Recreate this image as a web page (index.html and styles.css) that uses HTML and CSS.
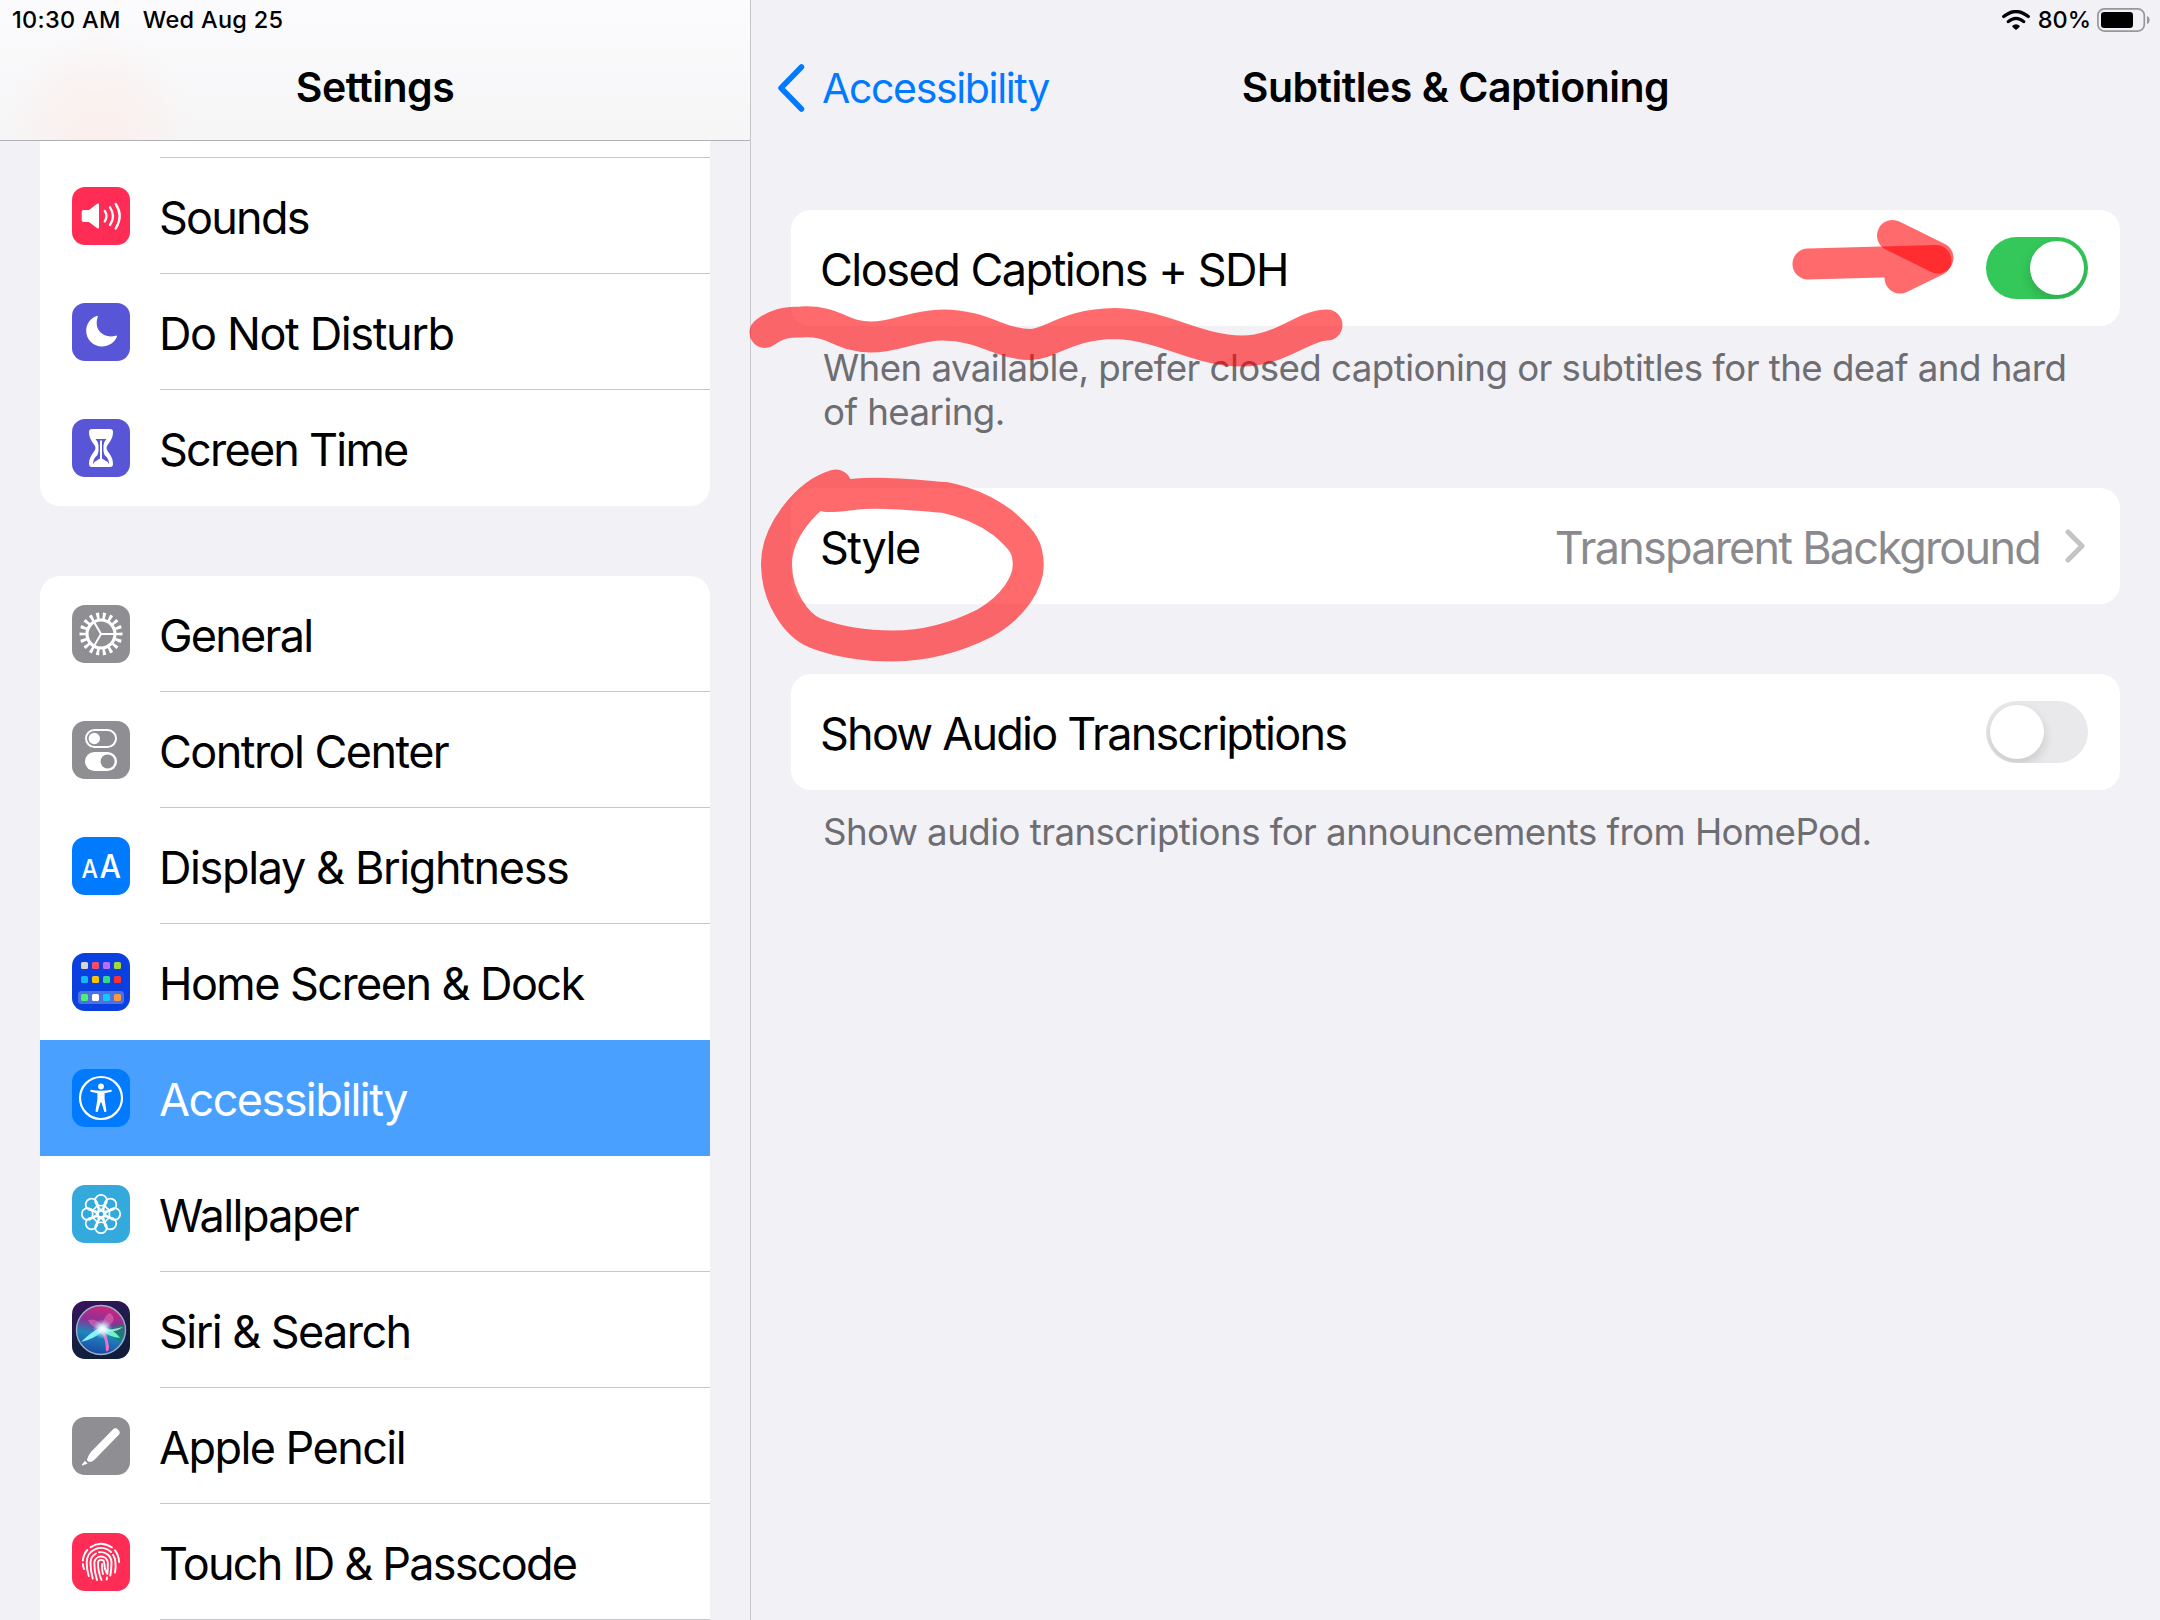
FILE: index.html
```html
<!DOCTYPE html>
<html lang="en">
<head>
    <meta charset="UTF-8">
    <meta name="viewport" content="width=device-width, initial-scale=1.0">
    <title>Settings</title>
    <link rel="stylesheet" href="styles.css">
</head>
<body>
    <div class="screen">
        <!-- Sidebar -->
        <aside class="sidebar">
            <header class="sidebar-header">
                <div class="status"><span>10:30 AM</span><span>Wed Aug 25</span></div>
                <h1 class="title">Settings</h1>
            </header>

            <ul class="group group-top">
                <li class="row stub"></li>
                <li class="row">
                    <svg class="icon pink" viewBox="0 0 58 58"><path fill="#fff" d="M11.5 23H17L25.2 16.8Q27 15.6 27 17.8V40.2Q27 42.4 25.2 41.2L17 35H11.5Q9.7 35 9.7 33.2V24.8Q9.7 23 11.5 23Z"/><path class="line" stroke-width="2.3" d="M32.8 24Q36.2 29 32.8 34.3M38 20.3Q44 29 38 38M43.7 17Q51.7 29 43.7 41.5"/></svg>
                    <span class="label tight">Sounds</span>
                </li>
                <li class="row">
                    <svg class="icon purple" viewBox="0 0 58 58"><path fill="#fff" d="M24.6 13C17 16 14.2 22 14.2 28A15.7 15.7 0 0 0 30 43.5C36.5 43.5 43 39.5 45 33.6Q45.2 32.3 43.8 32.7C33 36 21 28 25.8 13.8Q25.8 12.5 24.6 13Z"/></svg>
                    <span class="label loose">Do Not Disturb</span>
                </li>
                <li class="row">
                    <svg class="icon purple" viewBox="0 0 58 58"><path fill="#fff" d="M17 13Q17 10 20 10H38Q41 10 41 13C41 20 37 23.5 35 27Q34 29 35 31C37 34.5 41 38 41 45Q41 48 38 48H20Q17 48 17 45C17 38 21 34.5 23 31Q24 29 23 27C21 23.5 17 20 17 13Z"/><path fill="#5856d6" d="M23.5 20H34.5Q31.5 23 31.5 26.5V32.5Q31.7 36 35 38.5Q37 41 37 44.5H21Q21 41 23 38.5Q26.3 36 26.5 32.5V26.5Q26.5 23 23.5 20Z"/><path fill="#fff" d="M28 21.5H30V39.5L36 43.2V45H22V43.2L28 39.5Z"/></svg>
                    <span class="label tight">Screen Time</span>
                </li>
            </ul>

            <ul class="group group-main">
                <li class="row">
                    <svg class="icon gray" viewBox="0 0 58 58"><circle class="line" cx="29" cy="29" r="14" stroke-width="3.2"/><circle class="line teeth" cx="29" cy="29" r="18" stroke-width="7" pathLength="36"/><path class="line" stroke-width="2" d="M29 29H43M29 29L22 16.9M29 29L22 41.1"/></svg>
                    <span class="label tight">General</span>
                </li>
                <li class="row">
                    <svg class="icon gray" viewBox="0 0 58 58"><rect class="line" x="14" y="9" width="30" height="17" rx="8.5" stroke-width="2"/><circle fill="#fff" cx="22.3" cy="17.5" r="5.7"/><rect fill="#fff" x="13" y="31" width="32" height="19" rx="9.5"/><circle fill="#8e8e93" cx="35.6" cy="40.5" r="7"/></svg>
                    <span class="label">Control Center</span>
                </li>
                <li class="row">
                    <svg class="icon blue" viewBox="0 0 58 58"><text class="aa" x="9.5" y="41" font-size="26" textLength="16.5" lengthAdjust="spacingAndGlyphs">A</text><text class="aa" x="27.5" y="41" font-size="33" textLength="21.5" lengthAdjust="spacingAndGlyphs">A</text></svg>
                    <span class="label loose">Display &amp; Brightness</span>
                </li>
                <li class="row">
                    <svg class="icon home" viewBox="0 0 58 58">
                        <rect x="6" y="38" width="46" height="13" rx="3.5" fill="#4c71e2"/>
                        <rect x="9" y="9" width="7" height="7" rx="1.5" fill="#d6d6d6"/><rect x="20" y="9" width="7" height="7" rx="1.5" fill="#ff4d5e"/><rect x="31" y="9" width="7" height="7" rx="1.5" fill="#bf6bff"/><rect x="42" y="9" width="7" height="7" rx="1.5" fill="#a8d92e"/>
                        <rect x="9" y="23" width="7" height="7" rx="1.5" fill="#16b4fb"/><rect x="20" y="23" width="7" height="7" rx="1.5" fill="#ffc400"/><rect x="31" y="23" width="7" height="7" rx="1.5" fill="#33d98c"/><rect x="42" y="23" width="7" height="7" rx="1.5" fill="#ff3030"/>
                        <rect x="9" y="41" width="7" height="7" rx="1.5" fill="#50f06e"/><rect x="20" y="41" width="7" height="7" rx="1.5" fill="#fff"/><rect x="31" y="41" width="7" height="7" rx="1.5" fill="#16c8fb"/><rect x="42" y="41" width="7" height="7" rx="1.5" fill="#fb9a3c"/>
                    </svg>
                    <span class="label">Home Screen &amp; Dock</span>
                </li>
                <li class="row selected">
                    <svg class="icon blue" viewBox="0 0 58 58"><circle class="line" cx="29" cy="29" r="21" stroke-width="2.2"/><circle fill="#fff" cx="29" cy="17.5" r="2.9"/><path fill="#fff" d="M18.8 20.8Q29 22.8 39.2 20.8Q40.4 22 39.4 22.8L32.6 24.2V30L34.5 42.3Q33.6 43.6 32.3 42.7L29.5 33.5H28.5L25.7 42.7Q24.4 43.6 23.5 42.3L25.4 30V24.2L18.6 22.8Q17.6 22 18.8 20.8Z"/></svg>
                    <span class="label">Accessibility</span>
                </li>
                <li class="row">
                    <svg class="icon cyan" viewBox="0 0 58 58">
                        <defs><path id="petal" d="M29 25.8L24.5 19.5A5.9 5.9 0 1 1 33.5 19.5L29 25.8M24.5 19.5Q29 22 33.5 19.5"/></defs>
                        <g class="line" stroke-width="1.7">
                            <circle cx="29" cy="29" r="3.2"/>
                            <use href="#petal"/><use href="#petal" transform="rotate(45 29 29)"/><use href="#petal" transform="rotate(90 29 29)"/><use href="#petal" transform="rotate(135 29 29)"/><use href="#petal" transform="rotate(180 29 29)"/><use href="#petal" transform="rotate(225 29 29)"/><use href="#petal" transform="rotate(270 29 29)"/><use href="#petal" transform="rotate(315 29 29)"/>
                        </g>
                    </svg>
                    <span class="label">Wallpaper</span>
                </li>
                <li class="row">
                    <svg class="icon siri" viewBox="0 0 58 58">
                        <defs>
                            <linearGradient id="orb" x1="0.6" y1="0" x2="0.4" y2="1"><stop offset="0" stop-color="#d0267e"/><stop offset="0.35" stop-color="#8a3296"/><stop offset="0.6" stop-color="#1f86bc"/><stop offset="1" stop-color="#1a46a4"/></linearGradient>
                            <radialGradient id="glow"><stop offset="0" stop-color="#fff"/><stop offset="0.4" stop-color="#e4f8ff" stop-opacity="0.8"/><stop offset="1" stop-color="#7fd8ff" stop-opacity="0"/></radialGradient>
                        </defs>
                        <circle cx="29" cy="29" r="24.5" fill="url(#orb)" stroke="#9fb0c8" stroke-width="1.4"/>
                        <path fill="#14806c" opacity="0.8" d="M31 28L52 23Q54 33 48 41Z"/>
                        <path fill="#e86ab4" opacity="0.6" d="M29 28Q18 26 16 19Q25 17 30 25Q32 14 38 12Q48 20 31 28Z"/>
                        <path fill="#8af2f6" d="M31 25Q20 30 9 41Q22 38 31 30Z"/>
                        <path fill="#6ff5c0" d="M30 26Q42 28 48 37Q38 36 30 30Z"/>
                        <path fill="#f070c6" d="M28 28Q34 38 34 50Q37 51 37 46Q36 36 31 28Z"/>
                        <path fill="#c8ecf8" opacity="0.8" d="M31 29.5Q42 28 51 26Q42 33 31 29.5Z"/>
                        <circle cx="30.5" cy="28" r="10" fill="url(#glow)"/>
                    </svg>
                    <span class="label">Siri &amp; Search</span>
                </li>
                <li class="row">
                    <svg class="icon gray" viewBox="0 0 58 58"><path class="line" stroke-width="8" d="M22.5 37L43.5 15.5"/><path fill="#fff" d="M19.7 34.2L25.4 39.8Q22.5 43.5 19.5 44.7L16.5 44.7L14.8 43Q16 38 19.7 34.2ZM13 43.8L15.6 46.4L10.5 48.4Q9.7 48.4 10 47.6Z"/></svg>
                    <span class="label">Apple Pencil</span>
                </li>
                <li class="row">
                    <svg class="icon pink" viewBox="0 0 58 58"><path class="line" stroke-width="1.9" d="M18.5 14.2Q29 7.2 40 14.5M10.9 27.5Q11.3 21.5 15.3 17M43 17.3Q46.5 21.5 47.2 29M12 36Q11 33.5 10.9 31M16.7 43Q14.6 36 14.7 29.5A14.3 14.3 0 0 1 39 19M41 21.8Q45 28 43 39.5M20.7 45.5Q18.3 37 18.5 29.5A10.5 10.5 0 0 1 24 20.5M27 19.3A10.5 10.5 0 0 1 39.5 29.5Q39.5 37 38.3 42.5M25 47Q22 38 22.3 29.5A6.8 6.8 0 0 1 35.8 29.5Q36 36 35.3 41M29.5 47Q25.8 38 26 30A3.1 3.1 0 0 1 32.2 30Q32.5 36 34.5 39.5M30 31Q30 38 31 41M35 44.5L34.7 46.5"/></svg>
                    <span class="label tight">Touch ID &amp; Passcode</span>
                </li>
            </ul>
        </aside>

        <!-- Detail pane -->
        <main class="detail">
            <header class="detail-header">
                <div class="status status-right">
                    <svg class="wifi" viewBox="0 0 28 20"><path d="M1.7 6.6Q14-3.6 26.3 6.6M6.3 11.6Q14 5 21.7 11.6" fill="none" stroke="#000" stroke-width="3.2" stroke-linecap="round"/><path d="M10 16Q14 12.3 18 16Q17.5 17.5 14 20Q10.5 17.5 10 16Z"/></svg>
                    <span class="percent">80%</span>
                    <svg class="battery" viewBox="0 0 54 24"><rect x="0.9" y="0.9" width="46.4" height="22.2" rx="6.5" fill="none" stroke="#98979c" stroke-width="1.7"/><rect x="4" y="4" width="32" height="16" rx="3.2"/><path fill="#98979c" d="M50 8Q52.7 9 52.7 12T50 16Z"/></svg>
                </div>
                <div class="navbar">
                    <a class="back"><svg class="chevron-left" viewBox="0 0 28 48"><path d="M24.5 3L4 24L24.5 45"/></svg><span>Accessibility</span></a>
                    <h2 class="title">Subtitles &amp; Captioning</h2>
                    <span></span>
                </div>
            </header>

            <section class="section">
                <div class="card"><span class="name">Closed Captions + SDH</span><span class="toggle on"></span></div>
                <p class="note">When available, prefer closed captioning or subtitles for the deaf and hard<br>of hearing.</p>
            </section>
            <section class="section">
                <div class="card"><span class="name">Style</span><span class="value tight">Transparent Background</span><svg class="chevron-right" viewBox="0 0 20 34"><path d="M3 3L17 17L3 31"/></svg></div>
            </section>
            <section class="section">
                <div class="card"><span class="name tight">Show Audio Transcriptions</span><span class="toggle"></span></div>
                <p class="note">Show audio transcriptions for announcements from HomePod.</p>
            </section>
        </main>

        <!-- Marker strokes drawn over the screen -->
        <svg class="markup" viewBox="0 0 2160 1620">
            <path d="M765 332.5C776 324 785 322 801 322C836 320 840 337 871 337C897 337 914 325 943 325C982 325 1000 344 1030 344.5C1052 344 1066 324 1115 323.5C1165 325 1196 351 1242 351C1281 351 1304 325 1327 325"/>
            <path d="M836 485C808 493 776 531 776.5 565C777 597 796 625 815 633C841 643 865 646 893 646C925 646 957 637 985 623C1014 606 1028 583 1028.3 565C1028 548 1024 541 1003 523C987 511 967 502 945 497.5C925 496 890 492 864 493.5C850 494 841 497 827 496.5"/>
            <path d="M1808 264L1936 260.5L1900 278"/>
            <path d="M1892.5 235.5L1938 258"/>
        </svg>
    </div>
</body>
</html>
```
FILE: styles.css
```css
* {
    box-sizing: border-box;
}

body {
    margin: 0;
    background: #f2f1f6;
    font-family: 'Inter', 'Roboto', sans-serif;
    color: #000;
    overflow: hidden;
}

h1, h2, p, ul {
    margin: 0;
    padding: 0;
    font-weight: normal;
}

.screen {
    position: relative;
    display: flex;
    width: 2160px;
    height: 1620px;
    overflow: hidden;
}

/* Sidebar */
.sidebar {
    width: 751px;
    height: 1620px;
    border-right: 1px solid #c6c5ca;
    overflow: hidden;
}

.sidebar-header {
    height: 141px;
    border-bottom: 1px solid #b2b1b6;
    background: radial-gradient(ellipse 100px 110px at 98px 135px, rgba(252, 236, 232, 0.7) 10%, rgba(252, 236, 232, 0)), linear-gradient(#fbfbfd, #f6f6f7);
}

.status {
    display: flex;
    height: 40px;
    padding-left: 12px;
    gap: 22px;
    font-size: 23.5px;
    font-weight: 500;
    letter-spacing: 0.3px;
    line-height: 40px;
}

.title {
    font-size: 41px;
    font-weight: 600;
    letter-spacing: -0.5px;
    line-height: 95px;
    text-align: center;
}

.group {
    list-style: none;
    margin: 70px 40px 0;
    background: #fff;
    overflow: hidden;
}

.group-top {
    margin-top: 0;
    border-radius: 0 0 20px 20px;
}

.group-main {
    border-radius: 20px 20px 0 0;
}

.row {
    display: flex;
    align-items: center;
    height: 116px;
    padding-left: 32px;
    gap: 30px;
}

.stub {
    height: 17px;
    padding-left: 120px;
}

.stub::after {
    content: '';
    flex: 1;
    height: 16px;
    border-bottom: 1px solid #c6c6c8;
}

.icon {
    width: 58px;
    height: 58px;
    flex-shrink: 0;
    border-radius: 13px;
}

.pink { background: #ff2d55; }
.purple { background: #5856d6; }
.gray { background: #8e8e93; }
.blue { background: #007aff; }
.home { background: #0a3fe0; }
.cyan { background: #34aadc; }
.siri { background: linear-gradient(160deg, #3a1260, #14203f 60%, #101b3a); }

.line {
    fill: none;
    stroke: #fff;
    stroke-linecap: round;
}

.teeth {
    stroke-linecap: butt;
    stroke-dasharray: 0.9 1.1;
    stroke-dashoffset: 0.45;
}

.aa {
    fill: #fff;
    font-weight: 500;
}

.label {
    flex: 1;
    height: 116px;
    padding-top: 3px;
    border-bottom: 1px solid #c6c6c8;
    font-size: 45px;
    letter-spacing: -1.56px;
    line-height: 113px;
    text-indent: -1px;
    white-space: nowrap;
}

.group-top .row:last-child .label,
.selected .label,
.row:has(+ .selected) .label {
    border-bottom-color: transparent;
}

.selected {
    background: #4aa0ff;
    color: #fff;
}

/* Detail pane */
.detail {
    flex: 1;
}

.detail-header {
    height: 210px;
}

.status-right {
    justify-content: flex-end;
    align-items: center;
    padding-right: 9px;
    gap: 0;
    letter-spacing: 0;
}

.wifi {
    width: 28px;
    height: 20px;
    margin-right: 8px;
}

.battery {
    width: 54px;
    height: 24px;
    margin-left: 6px;
}

.navbar {
    display: grid;
    grid-template-columns: 1fr auto 1fr;
    align-items: center;
    height: 95px;
}

.back {
    display: flex;
    align-items: center;
    gap: 17px;
    padding-left: 26px;
    color: #007aff;
    font-size: 41px;
    letter-spacing: -1.35px;
}

.chevron-left {
    width: 28px;
    height: 48px;
    fill: none;
    stroke: #007aff;
    stroke-width: 5.5;
    stroke-linecap: round;
    stroke-linejoin: round;
}

.section {
    margin: 0 40px 70px;
}

.section:has(.toggle.on) {
    margin-bottom: 54px;
}

.card {
    display: flex;
    align-items: center;
    height: 116px;
    padding: 0 32px 0 29px;
    background: #fff;
    border-radius: 20px;
    font-size: 45px;
    letter-spacing: -1.5px;
}

.name,
.value {
    padding-top: 3px;
    white-space: nowrap;
}

.name {
    flex: 1;
}

.value {
    color: #8a8a8e;
}

.tight {
    letter-spacing: -1.78px;
}

.loose {
    letter-spacing: -1.38px;
}

.chevron-right {
    width: 20px;
    height: 34px;
    margin: 0 3px 0 25px;
    fill: none;
    stroke: #c4c4c6;
    stroke-width: 5;
    stroke-linecap: round;
    stroke-linejoin: round;
}

.toggle {
    width: 102px;
    height: 62px;
    padding: 4px;
    border-radius: 31px;
    background: #e9e9eb;
    overflow: hidden;
}

.toggle::before {
    content: '';
    display: block;
    width: 54px;
    height: 54px;
    border-radius: 50%;
    background: #fff;
    box-shadow: 0 5px 12px rgba(0, 0, 0, 0.15);
}

.toggle.on {
    background: #34c759;
}

.toggle.on::before {
    margin-left: auto;
}

.note {
    padding: 20px 0 0 32px;
    color: #6d6d72;
    font-size: 36.7px;
    letter-spacing: -0.56px;
    line-height: 44px;
    white-space: nowrap;
}

/* Markup */
.markup {
    position: absolute;
    top: 0;
    left: 0;
    width: 2160px;
    height: 1620px;
}

.markup path {
    fill: none;
    stroke: rgba(255, 0, 4, 0.58);
    stroke-width: 31px;
    stroke-linecap: round;
    stroke-linejoin: round;
}
```
